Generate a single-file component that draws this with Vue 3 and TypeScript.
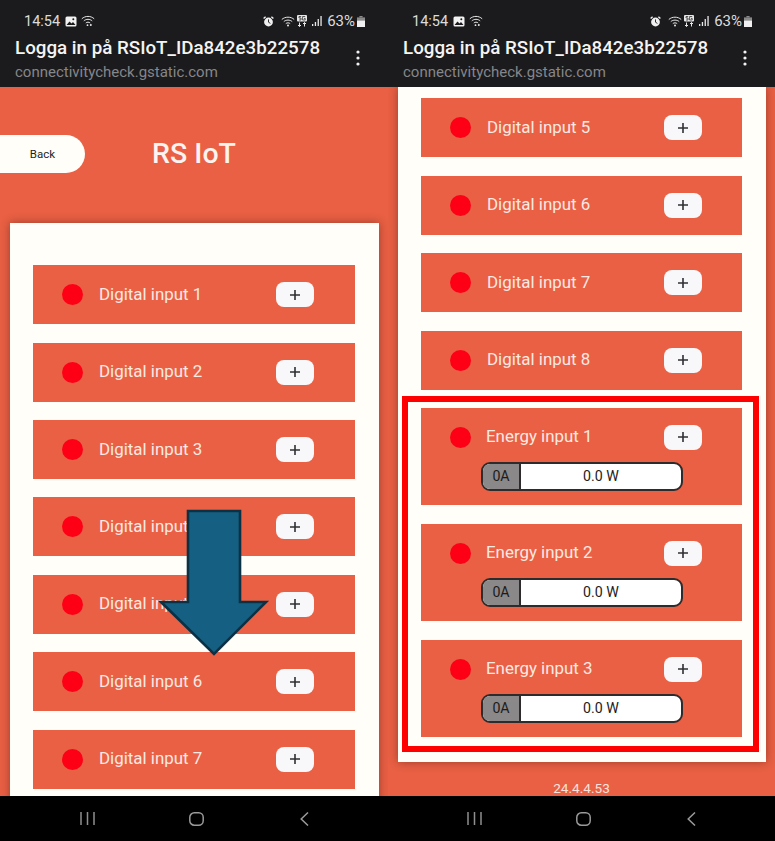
<template>
  <div class="screens">
    <section v-for="phone in phones" :key="phone.id" class="phone" :class="phone.id">
      <header class="chrome">
        <div class="status">
          <span class="time">14:54</span>
          <svg class="ic-image" width="12" height="11" viewBox="0 0 12 11">
            <rect x="0.5" y="0.5" width="11" height="10" rx="1.5" fill="#f2f2f2" />
            <path d="M1.5 9 4.5 5.5 6.5 7.5 8 6 10.5 9Z" fill="#1b1b1d" />
            <circle cx="8.3" cy="3.2" r="1" fill="#1b1b1d" />
          </svg>
          <svg class="ic-wifi" width="14" height="12" viewBox="0 0 14 12" fill="none" stroke="#e8e8e8" stroke-width="1">
            <path d="M0.8 3.8C4.2 0.6 9.8 0.6 13.2 3.8M2.8 5.9C5.1 3.8 8.9 3.8 11.2 5.9M4.8 8C6 6.9 8 6.9 9.2 8" />
            <circle cx="9.8" cy="10" r="1" fill="#e8e8e8" stroke="none" />
            <circle cx="6.5" cy="10.2" r="0.9" fill="#e8e8e8" stroke="none" />
          </svg>
          <span class="spacer"></span>
          <svg class="ic-alarm" width="11" height="11" viewBox="0 0 11 11">
            <circle cx="5.5" cy="6" r="4.4" fill="#f0f0f0" />
            <path d="M0.6 2.6 2.6 0.8M10.4 2.6 8.4 0.8" stroke="#f0f0f0" stroke-width="1.4" />
            <path d="M5.5 3.4V6.2L7.4 7.4" stroke="#1b1b1d" stroke-width="0.9" fill="none" />
          </svg>
          <svg class="ic-wifi2" width="14" height="11" viewBox="0 0 14 11" fill="none" stroke="#e8e8e8" stroke-width="1">
            <path d="M0.8 3.5C4.2 0.4 9.8 0.4 13.2 3.5M2.8 5.6C5.1 3.6 8.9 3.6 11.2 5.6M4.8 7.6C6 6.6 8 6.6 9.2 7.6" />
            <circle cx="7" cy="9.6" r="1" fill="#e8e8e8" stroke="none" />
          </svg>
          <svg class="ic-5g" width="10" height="12" viewBox="0 0 10 12">
            <rect x="0" y="0" width="10" height="6.5" rx="1" fill="#e8e8e8" />
            <path d="M2.5 7.5V11.5M1 10 2.5 11.5 4 10M7.5 11.5V7.5M6 9 7.5 7.5 9 9" stroke="#e8e8e8" stroke-width="1" fill="none" />
            <path d="M4.2 1.5H2V3H4V5H2M8.2 1.5H5.6V5H8.2V3.4H7" stroke="#1b1b1d" stroke-width="0.7" fill="none" />
          </svg>
          <svg class="ic-signal" width="10" height="10" viewBox="0 0 10 10" fill="#e8e8e8">
            <rect x="0" y="8" width="1.3" height="2" />
            <rect x="2.8" y="6" width="1.3" height="4" />
            <rect x="5.6" y="3" width="1.3" height="7" />
            <rect x="8.4" y="0" width="1.3" height="10" />
          </svg>
          <span class="battery-text">63%</span>
          <svg class="ic-battery" width="8" height="11" viewBox="0 0 8 11">
            <rect x="2.4" y="0" width="3.2" height="1.4" fill="#8a8a8a" />
            <rect x="0" y="1.4" width="8" height="3" fill="#8a8a8a" />
            <rect x="0" y="4.4" width="8" height="6.6" fill="#f0f0f0" />
          </svg>
        </div>
        <div class="address">
          <div class="address-text">
            <div class="page-title">Logga in på RSIoT_IDa842e3b22578</div>
            <div class="page-url">connectivitycheck.gstatic.com</div>
          </div>
          <svg class="ic-menu" width="4" height="16" viewBox="0 0 4 16" fill="#f2f2f2">
            <circle cx="2" cy="2" r="1.6" />
            <circle cx="2" cy="8" r="1.6" />
            <circle cx="2" cy="14" r="1.6" />
          </svg>
        </div>
      </header>

      <main class="viewport">
        <div v-if="phone.id === 'left'" class="topbar">
          <button class="back">Back</button>
          <h1 class="brand">RS IoT</h1>
        </div>

        <div class="card">
          <div
            v-for="item in phone.items"
            :key="item.name"
            class="item"
            :class="{ energy: item.energy }"
          >
            <div class="item-row">
              <span class="dot"></span>
              <span class="label">{{ item.name }}</span>
              <button class="plus">
                <svg width="10" height="10" viewBox="0 0 10 10">
                  <path d="M5 0V10M0 5H10" stroke="#2f3033" stroke-width="1.6" />
                </svg>
              </button>
            </div>
            <div v-if="item.energy" class="meter">
              <span class="amps">0A</span>
              <span class="watts">0.0 W</span>
            </div>
          </div>
        </div>

        <div v-if="phone.id === 'right'" class="version">24.4.4.53</div>
      </main>

      <nav class="navbar">
        <svg width="15" height="13" viewBox="0 0 15 13" stroke="#8f8f8f" stroke-width="1.5">
          <path d="M1 0V13M7.5 0V13M14 0V13" />
        </svg>
        <svg class="nav-home" width="15" height="14" viewBox="0 0 15 14" fill="none" stroke="#9a9a9a" stroke-width="1.5">
          <rect x="0.8" y="0.8" width="13.4" height="12.4" rx="4.5" />
        </svg>
        <svg width="9" height="14" viewBox="0 0 9 14" fill="none" stroke="#9a9a9a" stroke-width="1.5">
          <path d="M8 0.5 1.2 7 8 13.5" />
        </svg>
      </nav>

      <!-- annotations drawn over the screenshots -->
      <svg v-if="phone.id === 'left'" class="arrow" width="112" height="150" viewBox="0 0 112 150">
        <path
          d="M30 3H82V94H108L56 146 3 94H30Z"
          fill="#156082"
          stroke="#0c3044"
          stroke-width="2.6"
        />
      </svg>
      <div v-else class="highlight"></div>
    </section>
  </div>
</template>

<script setup lang="ts">
interface Item {
  name: string;
  energy?: boolean;
}

function digital(from: number, to: number): Item[] {
  const list: Item[] = [];
  for (let i = from; i <= to; i++) {
    list.push({ name: `Digital input ${i}` });
  }
  return list;
}

const phones = [
  { id: 'left', items: digital(1, 7) },
  {
    id: 'right',
    items: [
      ...digital(5, 8),
      { name: 'Energy input 1', energy: true },
      { name: 'Energy input 2', energy: true },
      { name: 'Energy input 3', energy: true },
    ],
  },
];
</script>

<style scoped>
.screens {
  display: flex;
  width: 775px;
  height: 841px;
  overflow: hidden;
  font-family: Roboto, "Liberation Sans", sans-serif;
}

.phone {
  position: relative;
  display: flex;
  flex-direction: column;
  flex: 0 0 388px;
  height: 841px;
}

.phone.right {
  flex-basis: 387px;
}

.chrome {
  flex: 0 0 87px;
  box-sizing: border-box;
  background: #1b1b1d;
  color: #f2f2f2;
  padding: 13px 0 0 15px;
}

.status {
  display: flex;
  align-items: center;
  height: 16px;
  padding: 0 23px 0 9px;
  font-size: 14.5px;
  color: #dcdcdc;
}

.time {
  width: 41px;
}

.ic-wifi {
  margin-left: 4px;
}

.spacer {
  flex: 1;
}

.ic-wifi2 {
  margin-left: 7px;
}

.ic-5g {
  margin-left: 2px;
}

.ic-signal {
  margin-left: 5px;
}

.battery-text {
  margin-left: 5px;
  font-size: 15px;
}

.ic-battery {
  margin-left: 2px;
}

.address {
  display: flex;
  align-items: center;
  justify-content: space-between;
  padding: 7px 28px 0 0;
}

.page-title {
  font-size: 18.75px;
  font-weight: 500;
  line-height: 24px;
  color: #f4f4f4;
  white-space: nowrap;
}

.page-url {
  margin-top: 1.5px;
  font-size: 15px;
  line-height: 20px;
  color: #85868a;
  white-space: nowrap;
}

.ic-menu {
  margin-bottom: 2px;
}

.viewport {
  flex: 1;
  min-height: 0;
  overflow: hidden;
  background: #e96044;
}

.topbar {
  display: grid;
  grid-template-columns: 85px 1fr 85px;
  align-items: center;
  padding-top: 48px;
}

.back {
  height: 38px;
  border: none;
  border-radius: 0 19px 19px 0;
  background: #fffef9;
  color: #1f1f1f;
  font: 400 11.5px Roboto, "Liberation Sans", sans-serif;
}

.brand {
  margin: -1px 0 1px;
  text-align: center;
  font-size: 28.5px;
  font-weight: 500;
  color: #fdf3ef;
}

.card {
  display: flex;
  flex-direction: column;
  gap: 18.4px;
  width: 369px;
  box-sizing: border-box;
  margin: 50px 0 0 10px;
  padding: 42.3px 24px 30px 23px;
  background: #fffef9;
  box-shadow: 0 0 9px rgba(60, 20, 10, 0.45);
}

.right .card {
  width: 368px;
  margin-top: 0;
  padding: 11.4px 24px 24px 23px;
}

.item {
  flex: 0 0 auto;
  box-sizing: border-box;
  height: 59px;
  padding-top: 17px;
  background: #e96044;
}

.item.energy {
  height: 97px;
  margin-bottom: 0.6px;
}

.item-row {
  display: flex;
  align-items: center;
  height: 25px;
  padding-left: 29px;
}

.dot {
  width: 21px;
  height: 21px;
  border-radius: 50%;
  background: #fe0016;
}

.label {
  width: 177px;
  margin-left: 16px;
  margin-bottom: 2px;
  font-size: 16.9px;
  color: #fbe9e3;
  white-space: nowrap;
}

.energy .label {
  margin-left: 15px;
  width: 178px;
}

.plus {
  display: flex;
  align-items: center;
  justify-content: center;
  width: 38px;
  height: 25px;
  padding: 0;
  border: none;
  border-radius: 8px;
  background: #f8f8fa;
}

.meter {
  display: flex;
  width: 202px;
  height: 29px;
  box-sizing: border-box;
  margin: 12px 0 0 60px;
  border: 2px solid #2d2b2b;
  border-radius: 9px;
  overflow: hidden;
  background: #fff;
  font-size: 14.2px;
  line-height: 25px;
  color: #1c1c1c;
}

.amps {
  width: 36px;
  border-right: 2px solid #2d2b2b;
  background: #8a8888;
  text-align: center;
}

.watts {
  flex: 1;
  text-align: center;
}

.version {
  margin-top: 18px;
  text-align: center;
  font-size: 13.6px;
  line-height: 16px;
  color: #fbe3dc;
}

.navbar {
  flex: 0 0 45px;
  display: flex;
  align-items: center;
  justify-content: space-between;
  padding: 0 79px 0 80px;
  background: #000;
}

.right .navbar {
  padding: 0 79px;
}

.nav-home {
  margin-right: 3px;
}

.arrow {
  position: absolute;
  left: 158px;
  top: 508px;
}

.highlight {
  position: absolute;
  left: 14px;
  top: 396px;
  width: 357px;
  height: 356px;
  box-sizing: border-box;
  border: 6px solid #fe0000;
}
</style>
